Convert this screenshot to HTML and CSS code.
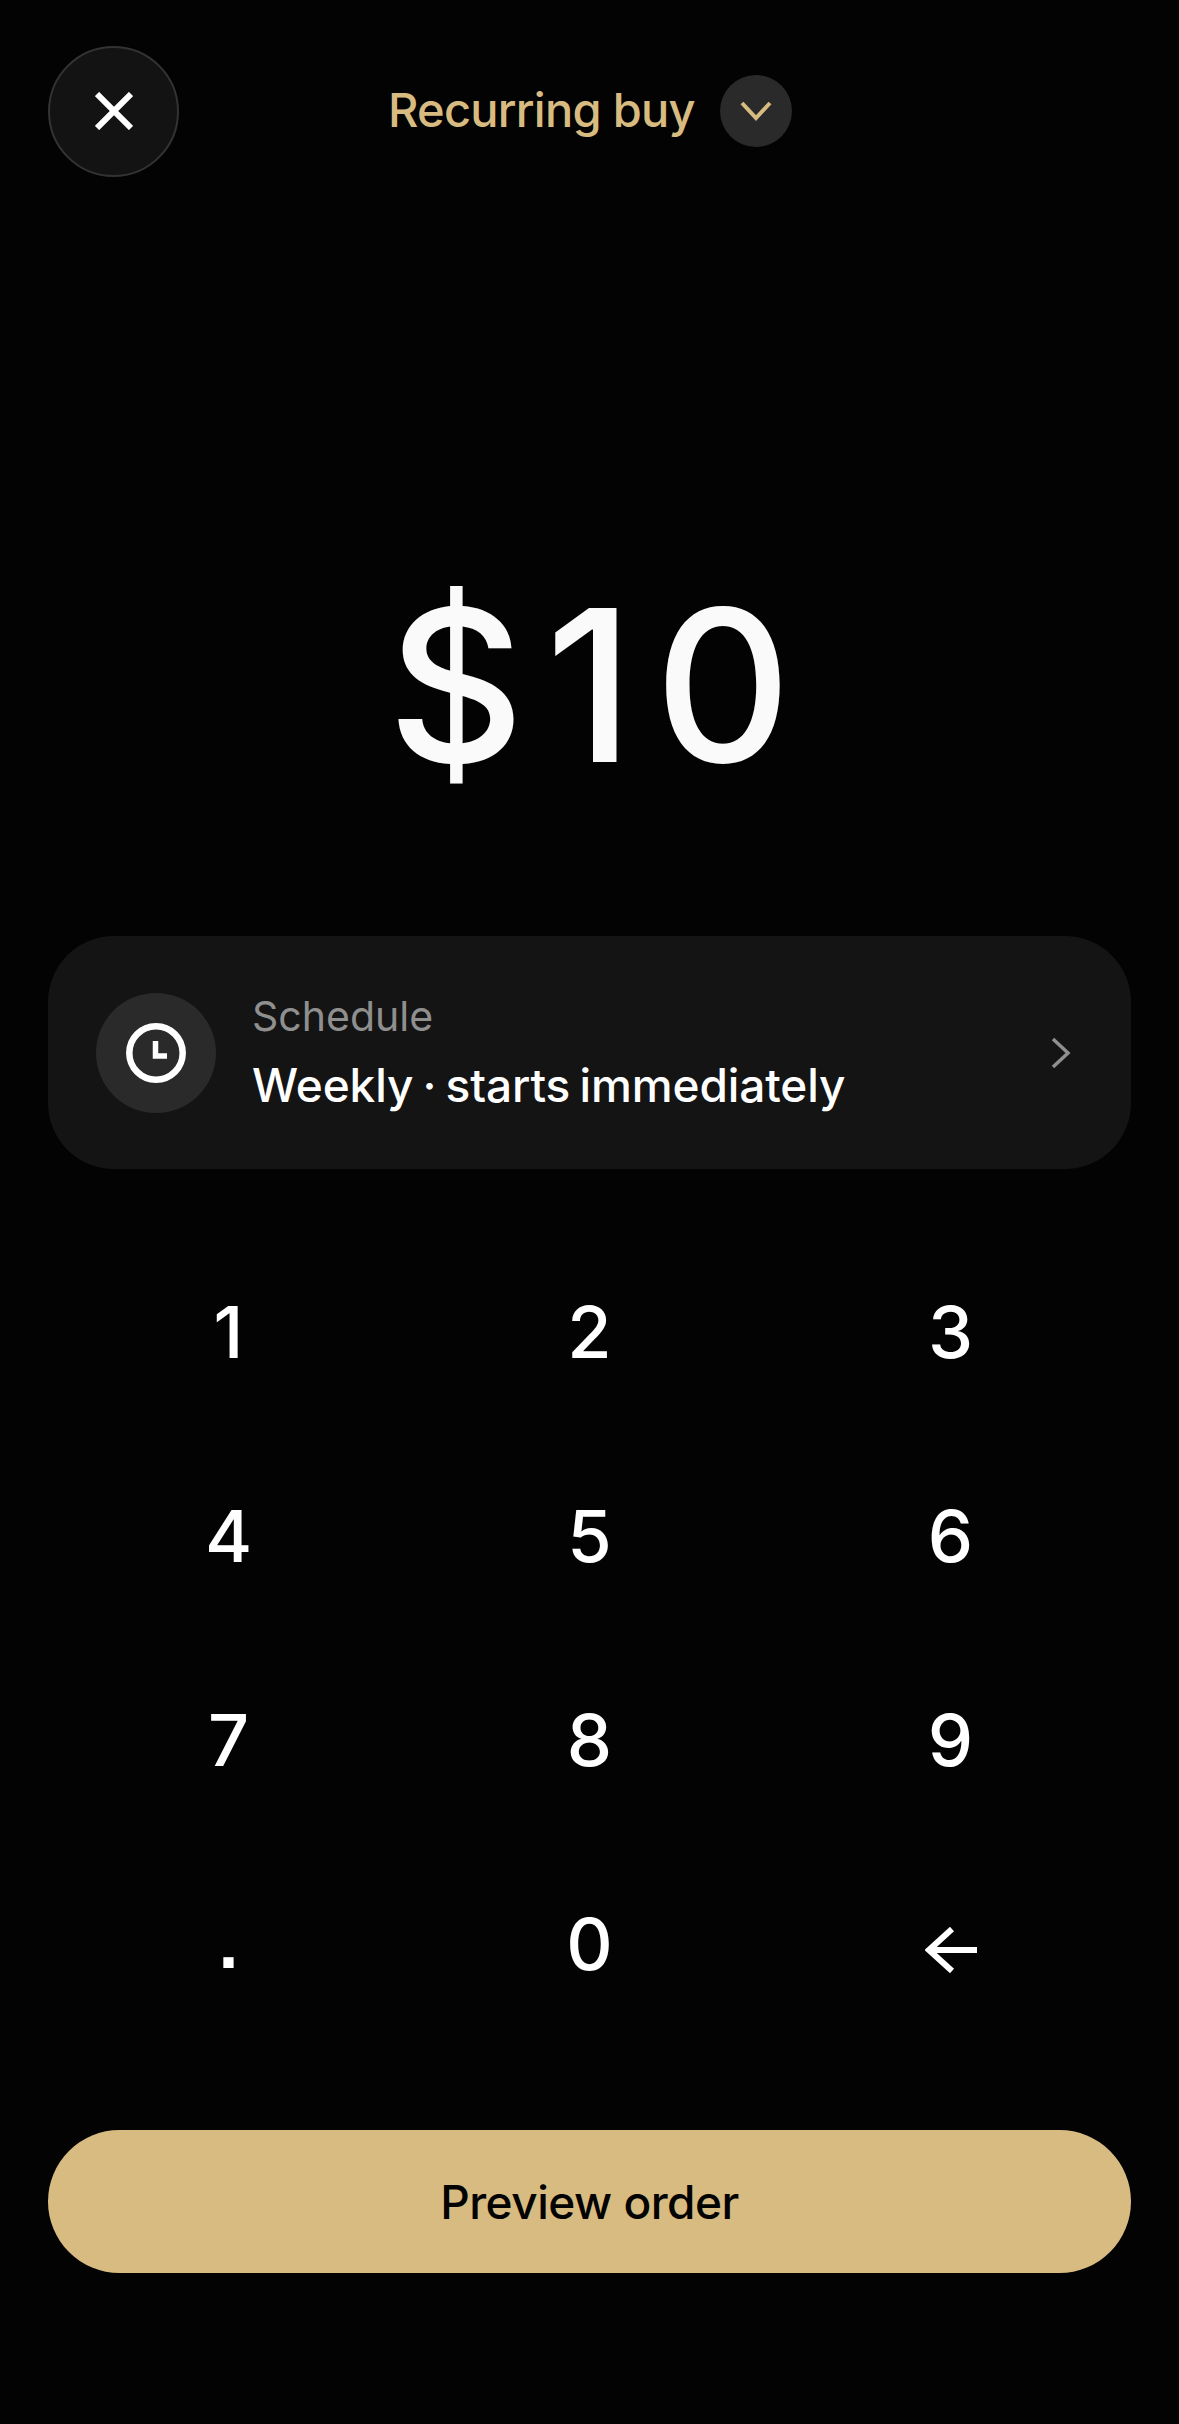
FILE: index.html
```html
<!DOCTYPE html>
<html lang="en">
<head>
    <meta charset="UTF-8">
    <meta name="viewport" content="width=device-width, initial-scale=1.0">
    <title>Recurring buy</title>
    <link rel="stylesheet" href="styles.css">
</head>
<body>
    <header class="top-bar">
        <button class="close-btn" aria-label="Close">
            <svg width="38" height="38" viewBox="0 0 38 38" fill="none" stroke="#ffffff" stroke-width="6"><path d="M2 2L36 36M36 2L2 36"/></svg>
        </button>
        <div class="title-wrap">
            <span class="title">Recurring buy</span>
            <span class="title-caret">
                <svg width="32" height="20" viewBox="0 0 32 20" fill="none" stroke="#d8bb80" stroke-width="4"><path d="M2 2L16 17L30 2"/></svg>
            </span>
        </div>
    </header>

    <div class="amount">$10</div>

    <section class="schedule-card">
        <span class="clock-badge">
            <svg width="60" height="60" viewBox="0 0 60 60" fill="none" stroke="#ffffff" stroke-width="6.5"><circle cx="30" cy="30" r="26.7"/><path d="M29.5 18V33H41" stroke-width="5.5"/></svg>
        </span>
        <div class="schedule-text">
            <div class="schedule-label">Schedule</div>
            <div class="schedule-value">Weekly · starts immediately</div>
        </div>
        <svg class="schedule-arrow" width="20" height="32" viewBox="0 0 20 32" fill="none" stroke="#8f8f8f" stroke-width="3.5"><path d="M2 2L17 16L2 30"/></svg>
    </section>

    <div class="keypad">
        <div class="key">1</div>
        <div class="key">2</div>
        <div class="key">3</div>
        <div class="key">4</div>
        <div class="key">5</div>
        <div class="key">6</div>
        <div class="key">7</div>
        <div class="key">8</div>
        <div class="key">9</div>
        <div class="key key-dot">.</div>
        <div class="key">0</div>
        <div class="key">
            <svg class="key-back" width="52" height="46" viewBox="0 0 52 46" fill="none" stroke="#ffffff" stroke-width="6"><path d="M52 23H4M27 2L4 23L27 44"/></svg>
        </div>
    </div>

    <button class="preview-btn">Preview order</button>
</body>
</html>
```

FILE: styles.css
```css
* {
    box-sizing: border-box;
}
body {
    margin: 0;
    width: 1179px;
    height: 2424px;
    padding: 45px 48px 0;
    background: #030303;
    color: #ffffff;
    font-family: Inter, "Liberation Sans", sans-serif;
    overflow: hidden;
}
button {
    font-family: inherit;
    padding: 0;
    cursor: pointer;
}
.top-bar {
    display: flex;
    align-items: center;
    height: 132px;
}
.close-btn {
    width: 131px;
    height: 131px;
    border-radius: 50%;
    border: 2px solid #333333;
    background: #131313;
    display: flex;
    align-items: center;
    justify-content: center;
}
.title-wrap {
    display: flex;
    align-items: center;
    gap: 25px;
    margin-left: 209px;
}
.title {
    font-size: 47px;
    font-weight: 500;
    letter-spacing: -0.75px;
    padding-bottom: 3px;
    color: #d8bb80;
}
.title-caret {
    width: 72px;
    height: 72px;
    border-radius: 50%;
    background: #2a2a2a;
    display: flex;
    align-items: center;
    justify-content: center;
}
.amount {
    margin-top: 378px;
    height: 260px;
    line-height: 260px;
    text-align: center;
    font-size: 212px;
    font-weight: 540;
    letter-spacing: 21px;
    padding-left: 21px;
    color: #fafafa;
}
.schedule-card {
    margin-top: 121px;
    height: 233px;
    border-radius: 66px;
    background: #141414;
    display: flex;
    align-items: center;
    padding: 0 60px 0 48px;
}
.clock-badge {
    width: 120px;
    height: 120px;
    border-radius: 50%;
    background: #2a2a2a;
    display: flex;
    align-items: center;
    justify-content: center;
    flex-shrink: 0;
}
.schedule-text {
    flex: 1;
    margin-left: 36px;
    padding-bottom: 3px;
}
.schedule-label {
    font-size: 41px;
    line-height: 56px;
    color: #8f8f8f;
}
.schedule-value {
    font-size: 46px;
    font-weight: 500;
    letter-spacing: -0.1px;
    word-spacing: -3px;
    line-height: 60px;
    margin-top: 11px;
}
.keypad {
    margin-top: 60px;
    display: grid;
    grid-template-columns: repeat(3, 361px);
    grid-auto-rows: 204px;
    justify-content: center;
}
.key {
    display: flex;
    align-items: center;
    justify-content: center;
    font-size: 72px;
    font-weight: 500;
}
.key-dot {
    font-family: "Liberation Sans", sans-serif;
    font-weight: 700;
}
.key-back {
    margin-top: 14px;
}
.preview-btn {
    display: block;
    width: 100%;
    height: 143px;
    margin-top: 85px;
    border: none;
    border-radius: 72px;
    background: #d8bb80;
    color: #030303;
    font-size: 46px;
    font-weight: 500;
    letter-spacing: -0.5px;
}
```
